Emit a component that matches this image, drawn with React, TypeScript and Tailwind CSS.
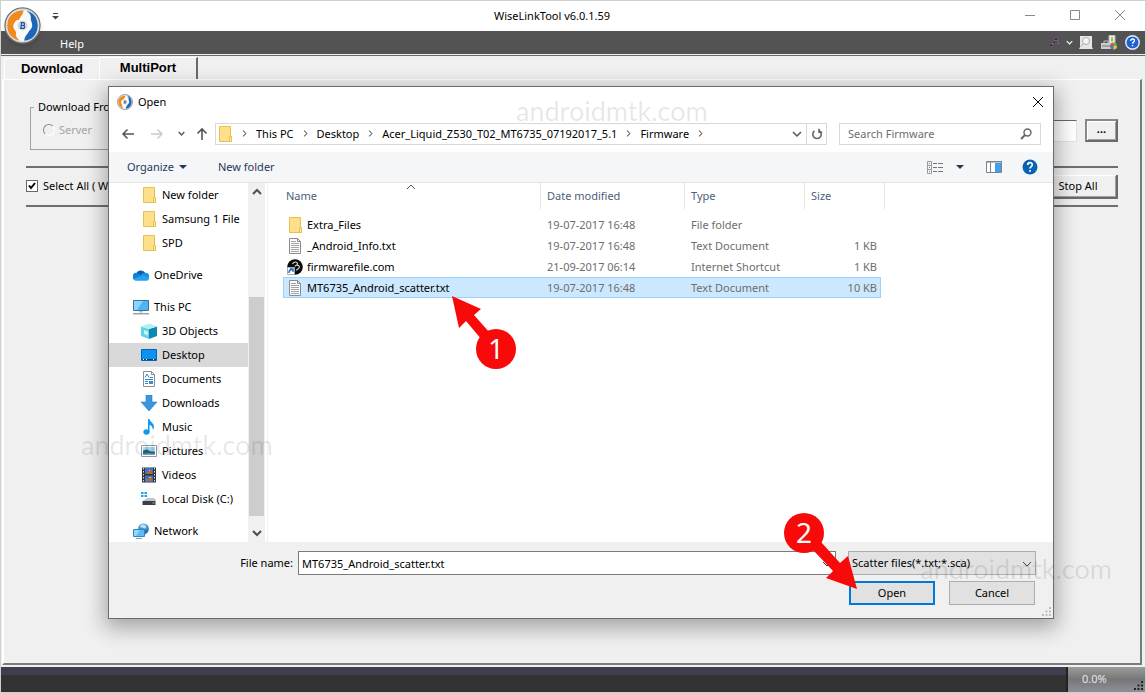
import type { ReactNode } from "react";

const places = [
  { name: "New folder", icon: "folder", level: 2 },
  { name: "Samsung 1 File", icon: "folder", level: 2 },
  { name: "SPD", icon: "folder", level: 2 },
  { name: "OneDrive", icon: "onedrive", level: 1 },
  { name: "This PC", icon: "pc", level: 1 },
  { name: "3D Objects", icon: "cube", level: 2 },
  { name: "Desktop", icon: "desktop", level: 2, active: true },
  { name: "Documents", icon: "documents", level: 2 },
  { name: "Downloads", icon: "downloads", level: 2 },
  { name: "Music", icon: "music", level: 2 },
  { name: "Pictures", icon: "pictures", level: 2 },
  { name: "Videos", icon: "videos", level: 2 },
  { name: "Local Disk (C:)", icon: "disk", level: 2 },
  { name: "Network", icon: "network", level: 1 },
];

const files = [
  { name: "Extra_Files", icon: "folder", date: "19-07-2017 16:48", type: "File folder", size: "" },
  { name: "_Android_Info.txt", icon: "text", date: "19-07-2017 16:48", type: "Text Document", size: "1 KB" },
  { name: "firmwarefile.com", icon: "link", date: "21-09-2017 06:14", type: "Internet Shortcut", size: "1 KB" },
  {
    name: "MT6735_Android_scatter.txt",
    icon: "text",
    date: "19-07-2017 16:48",
    type: "Text Document",
    size: "10 KB",
    selected: true,
  },
];

const crumbs = ["This PC", "Desktop", "Acer_Liquid_Z530_T02_MT6735_07192017_5.1", "Firmware"];

const glyphs: Record<string, ReactNode> = {
  folder: (
    <>
      <path d="M2.5.5h11v10h1v5h-12z" fill="#ffe08a" stroke="#e9c04c" />
      <path d="M12.5 15.5v-5h2v5z" fill="#ffe9a8" stroke="#e9c04c" />
    </>
  ),
  onedrive: (
    <>
      <path d="M3 7.500A5 5 0 0 1 12.300 6L9 11H3z" fill="#0a5fb5" />
      <path d="M4 6A3.700 3.700 0 0 0 .8 12.500l8.200-3.900z" fill="#1180d8" />
      <path d="M8 9.500a3.800 3.800 0 0 1 4.500-3.700A3.700 3.700 0 0 1 15.500 12z" fill="#1a90e6" />
      <path d="M.7 12c.5 1.300 1.500 1.800 2.800 1.800H13c2.200 0 3.400-1.800 2.800-3.500L9 8.200z" fill="#27a3f2" />
    </>
  ),
  pc: (
    <>
      <path d="M.5 1.500h15v10H.5z" fill="#4db4f5" stroke="#44718f" />
      <path d="M1 2h9L4 11H1z" fill="#8ad4ff" />
      <path d="M6 12h4v1.500H6z" fill="#b9c6cf" />
      <path d="M0 14h16v1.500H0z" fill="#8fa6b5" />
    </>
  ),
  cube: (
    <>
      <path d="M0 3.500 8 6v10L0 13z" fill="#5fd3e6" />
      <path d="M16 3.500 8 6v10l8-3z" fill="#0f87b0" />
      <path d="m0 3.500 8-3 8 3L8 6z" fill="#b4edf5" />
      <path d="m3 7 4 1.500v4L3 11z" fill="#c9f4f8" />
    </>
  ),
  desktop: (
    <>
      <path d="M.5 2.500h15v11H.5z" fill="#0a93f5" stroke="#0763ab" />
      <path d="M1 12.500h14" stroke="#0a3f73" />
      <path d="M2 12.500h1m2 0h1m6 0h1" stroke="#fff" />
    </>
  ),
  documents: (
    <>
      <path d="M2.500.5h8l3 3v12h-11z" fill="#fff" stroke="#8a8f94" />
      <path d="M10.500.5v3h3" fill="none" stroke="#8a8f94" />
      <path d="M4 6.500 6 3l2 3.500M9 6.500h3M4 8.500h8M4 10.500h3M4 12.500h3" fill="none" stroke="#2b88d0" />
      <path d="M8 10h4v3H8z" fill="#3f8fc4" />
    </>
  ),
  downloads: <path d="M5 0h6v7h5l-8 9-8-9h5z" fill="#3a96e0" stroke="#2a82cb" strokeWidth=".6" />,
  music: (
    <>
      <path d="M7 0h1.500c.5 3 4.500 4 4.500 7.500 0 1.500-.5 2.500-1.300 3.200C12 8 10.500 6.500 8.500 6v7H7z" fill="#0c9bf0" />
      <ellipse cx="5.500" cy="13" rx="3.100" ry="2.700" fill="#0c9bf0" />
    </>
  ),
  pictures: (
    <>
      <path d="M.5 2.500h15v11H.5z" fill="#fff" stroke="#8f979d" />
      <path d="M2 4h12v8H2z" fill="#9fd6f5" />
      <path d="M2 8c3-2 5-1 7 0s4 0 5 1v3H2z" fill="#2f6276" />
      <path d="M2 10.500h12V12H2z" fill="#6ea8cc" />
    </>
  ),
  videos: (
    <>
      <path d="M1 .5h14v15H1z" fill="#333" />
      <path d="M2.500 1v14M13.500 1v14" stroke="#ddd" strokeDasharray="1.500 1.500" />
      <path d="M4 1h8v6H4zM4 8.500h8v6.500H4z" fill="#3f6fd1" />
      <path d="M6 4.500h3V3h2v4H6zM5 12h4v-2h2v4H5z" fill="#b9682a" />
      <path d="M8 3h1v1H8zM8 10h2v1H8z" fill="#f4c542" />
    </>
  ),
  disk: (
    <>
      <path d="M0 1h2.500v2H0zM3.500 1H6v2H3.500zM0 4h2.500v2H0zM3.500 4H6v2H3.500z" fill="#19a4f0" />
      <path d="M4 8.500 6 7h7l2 2v1H2z" fill="#c2c6c9" />
      <path d="M1.500 10h13v4h-13z" fill="#3a3f42" />
      <path d="M11.500 12h2" stroke="#5fe06a" />
    </>
  ),
  network: (
    <>
      <circle cx="10.500" cy="6" r="5.500" fill="#4a94c9" />
      <path d="M7 3c2-2.500 5-2 6 0s-1 3-3 2-3 0-3-2z" fill="#b8dff2" />
      <path d="M12 7c2-1 3 0 3.500-.5A6 6 0 0 1 12 11z" fill="#2a6da1" />
      <path d="M.5 6.500h11v7H.5z" fill="#5bbcf7" stroke="#2f86bd" />
      <path d="M1 7h6l-4 6H1z" fill="#92d8fd" />
      <path d="M3 15.500h6" stroke="#7ea3b8" />
    </>
  ),
  text: (
    <>
      <path d="M2.500.5h8l3 3v12h-11z" fill="#fafafa" stroke="#8c8c8c" />
      <path d="M10.500.5v3h3" fill="none" stroke="#8c8c8c" />
      <path d="M4 3.500h5M4 5.500h8M4 7.500h8M4 9.500h8M4 11.500h8M4 13.500h8" stroke="#a5a5a5" />
    </>
  ),
  link: (
    <>
      <circle cx="8" cy="8" r="7.800" fill="#0b0b0b" />
      <path d="M5.500 5c1-2.500 4.500-2.500 5-.5S8 6 8 7.500M10 6.500c2-.5 3 1 2 2.500s-2.500 1-2.500 2.500" fill="none" stroke="#ddd" strokeWidth="1.100" />
      <path d="M.5 8.500h7v7h-7z" fill="#fff" stroke="#aaa" />
      <path d="M2 14c0-2.500 1-3.500 3-3.500M3 10h3v3" fill="none" stroke="#1766c2" strokeWidth="1.400" />
    </>
  ),
};

function Icon({ name }: { name: string }) {
  return (
    <svg viewBox="0 0 16 16" className="h-4 w-4 shrink-0" aria-hidden="true">
      {glyphs[name]}
    </svg>
  );
}

function Chevron({ className }: { className: string }) {
  return (
    <svg viewBox="0 0 10 10" className={className} fill="none" stroke="currentColor" aria-hidden="true">
      <path d="m1 3 4 4 4-4" />
    </svg>
  );
}

function Logo({ className }: { className: string }) {
  return (
    <svg viewBox="0 0 40 40" className={className} aria-hidden="true">
      <circle cx="20" cy="20" r="19" fill="#d9dbdd" stroke="#6f7478" strokeWidth="1.500" />
      <circle cx="20" cy="20" r="16.800" fill="#f8f9fa" />
      <path d="M21 3.500C10 3.500 3.500 11 3.500 20S9 34.500 17 36.500c-3-3-5-5.500-4-8.500.5-2-3-4-3-7.500 0-2.500 2-4 3-6 2-.5 3 0 4-2 1-3 4-4.500 4-9z" fill="#f08a1d" />
      <path d="M24 4c3.500 2 5.500 4.500 5 8-.5 2.500 1.500 4.500 1.500 8s-3 5-4 7c-1.500 3-4.500 5-4.500 9.500C31 36 36.500 29 36.500 20S31 5.500 24 4z" fill="#1b66b8" />
      <circle cx="20" cy="20" r="5.500" fill="#d3d9e0" />
      <path d="M18 17h2.700a1.400 1.400 0 0 1 0 3h-2.200 2.200a1.500 1.500 0 0 1 0 3.200H17.500M19 17l-.8 6" fill="none" stroke="#1a4f94" strokeWidth="1.300" />
    </svg>
  );
}

function HelpBadge({ className }: { className: string }) {
  return (
    <svg viewBox="0 0 16 16" className={className} aria-hidden="true">
      <circle cx="8" cy="8" r="7.500" fill="currentColor" />
      <path d="M5.700 6c0-3 4.600-3 4.600-.3C10.300 7.500 8 7.600 8 9.600M8 11v1.700" fill="none" stroke="#fff" strokeWidth="1.700" />
    </svg>
  );
}

function TitleBar() {
  return (
    <header className="flex h-[30px] items-center bg-white pr-[3px]">
      <div className="w-24 pl-[51px]">
        <button type="button" aria-label="Customize toolbar" className="block text-[#444]">
          <svg viewBox="0 0 7 8" className="h-2 w-[7px]" aria-hidden="true">
            <path d="M1 1.500h5" stroke="currentColor" />
            <path d="M0 4h7L3.500 7.500z" fill="currentColor" />
          </svg>
        </button>
      </div>
      <h1 className="flex-1 text-center">WiseLinkTool v6.0.1.59</h1>
      <div className="flex text-[#8a8a8a]">
        <button type="button" aria-label="Minimize" className="flex h-7 w-[45px] items-center justify-center">
          <svg viewBox="0 0 12 12" className="h-3 w-3" stroke="currentColor"><path d="M1 5.500h10" /></svg>
        </button>
        <button type="button" aria-label="Maximize" className="flex h-7 w-[45px] items-center justify-center">
          <svg viewBox="0 0 12 12" className="h-3 w-3" fill="none" stroke="currentColor"><path d="M1.500.5h9v9h-9z" /></svg>
        </button>
        <button type="button" aria-label="Close window" className="flex h-7 w-[45px] items-center justify-center">
          <svg viewBox="0 0 12 12" className="h-3 w-3" stroke="currentColor"><path d="m1 0 10 10M11 0 1 10" /></svg>
        </button>
      </div>
    </header>
  );
}

function MenuBar() {
  return (
    <nav className="flex h-[23px] items-center justify-between bg-[#535353] pr-1.5 pl-[59px] text-white">
      <button type="button" className="pt-0.5">Help</button>
      <div className="flex items-center">
        <svg viewBox="0 0 10 10" className="h-2.5 w-2.5" fill="none" aria-hidden="true">
          <path d="M1 9c0-3 2-3 2.500-5S7 1 8 3s0 3 1.500 4" stroke="#b04fc0" strokeWidth="1.200" strokeDasharray="2 1.200" />
          <path d="M0 7.500h2M3 4h2M5 1.500h2" stroke="#222" />
        </svg>
        <Chevron className="mr-0.5 ml-1.5 h-[7px] w-[7px] stroke-[1.500px]" />
        <svg viewBox="0 0 14 14" className="mx-1 h-3.5 w-3.5" aria-hidden="true">
          <path d="M1 0h12v11l1 2H0l1-2z" fill="#e6e6e6" />
          <circle cx="7" cy="5" r="3.500" fill="#f7f7f7" stroke="#aaa" />
          <path d="m4 8-2 2.500" stroke="#aaa" />
        </svg>
        <svg viewBox="0 0 17 16" className="mr-2 ml-1 h-4 w-[17px]" aria-hidden="true">
          <path d="M8 .5h6v8H8z" fill="#e8efe0" stroke="#b5bdb0" />
          <path d="M11 2.500v4" stroke="#72a84d" strokeWidth="1.500" />
          <path d="M0 8h12v6H0z" fill="#c9ced1" />
          <path d="M1 11h11" stroke="#777" />
          <path d="M3 8V6h4v2" fill="none" stroke="#bbb" />
          <path d="M12.500 7.500V11H9a3.500 3.500 0 0 1 3.500-3.500z" fill="#e8502f" />
          <path d="M12.500 7.500A3.500 3.500 0 0 1 16 11h-3.500z" fill="#58b947" />
          <path d="M9 11h3.500v3.500A3.500 3.500 0 0 1 9 11z" fill="#3b7de0" />
          <path d="M16 11a3.500 3.500 0 0 1-3.500 3.500V11z" fill="#f6c62e" />
        </svg>
        <HelpBadge className="h-[13px] w-[13px] rounded-full bg-white text-[#1d62cf] ring-1 ring-[#cfe0f7]" />
      </div>
    </nav>
  );
}

function MultiPortPanel() {
  return (
    <main className="mr-[3px] ml-px flex flex-1 flex-col border-t border-r-2 border-b-2 border-l-2 border-t-white border-r-[#7b7b7b] border-b-[#7b7b7b] border-l-white pt-[19px] pr-[22px] pl-[22px]">
      <div className="flex items-start justify-between">
        <fieldset className="ml-1 h-[51px] w-72 border border-[#a0a0a0] px-[3px]">
          <legend className="px-1 leading-4">Download From</legend>
          <label className="ml-[9px] flex items-center gap-1 pt-[7px] text-[#a5a5a5]">
            <input
              type="radio"
              name="source"
              disabled
              className="h-3 w-3 appearance-none rounded-full border border-[#8a8a8a] border-r-white border-b-white bg-[#f0f0f0]"
            />
            Server
          </label>
        </fieldset>
        <div className="flex flex-1 items-center gap-2 pt-5 pl-6">
          <input
            aria-label="Scatter file"
            className="h-[22px] min-w-0 flex-1 border border-[#e3e3e3] border-t-[#696969] bg-white px-1"
          />
          <button
            type="button"
            className="h-[23px] w-[33px] border-2 border-[#6a6a6a] border-t-[#8a8a8a] border-l-[#8a8a8a] pb-1 font-bold shadow-[inset_1px_1px_#fff,inset_-1px_-1px_#a0a0a0]"
          >
            ...
          </button>
        </div>
      </div>
      <hr className="mt-4 border-t-2 border-[#6f6f6f]" />
      <div className="flex h-[37px] items-center justify-between">
        <label className="flex items-center gap-[5px] pb-0.5">
          <span className="relative flex">
            <input
              type="checkbox"
              defaultChecked
              className="h-3 w-3 appearance-none border border-[#696969] bg-white"
            />
            <svg viewBox="0 0 12 12" className="absolute inset-0 h-3 w-3" fill="none" aria-hidden="true">
              <path d="m3 5.500 2 2.500 4-5" stroke="#000" strokeWidth="2" />
            </svg>
          </span>
          Select All ( With Scatter )
        </label>
        <button
          type="button"
          className="h-6 w-[78px] border-r-2 border-b-2 border-[#6a6a6a] shadow-[inset_1px_1px_#fff,inset_-1px_-1px_#a0a0a0]"
        >
          Stop All
        </button>
      </div>
      <hr className="border-t-2 border-[#6f6f6f]" />
    </main>
  );
}

function AddressBar() {
  return (
    <div className="flex h-[37px] items-center pr-3 pl-3 text-[#555]">
      <button type="button" aria-label="Back">
        <svg viewBox="0 0 14 12" className="h-3 w-3.5" fill="none" stroke="#555" strokeWidth="1.500">
          <path d="M13 6H2m4.500-4.500L2 6l4.500 4.500" />
        </svg>
      </button>
      <button type="button" aria-label="Forward" className="ml-[15px]">
        <svg viewBox="0 0 14 12" className="h-3 w-3.5" fill="none" stroke="#ccc" strokeWidth="1.500">
          <path d="M1 6h11M7.500 1.500 12 6l-4.500 4.500" />
        </svg>
      </button>
      <button type="button" aria-label="Recent locations" className="ml-3.5">
        <Chevron className="h-[7px] w-[7px] stroke-2" />
      </button>
      <button type="button" aria-label="Up" className="ml-[11px]">
        <svg viewBox="0 0 12 14" className="h-3.5 w-3" fill="none" stroke="#555" strokeWidth="1.600">
          <path d="M6 13V2M1.500 6.500 6 2l4.500 4.500" />
        </svg>
      </button>
      <div className="ml-[7px] flex h-[22px] flex-1 items-center border border-[#d9d9d9] pl-px text-black">
        <Icon name="folder" />
        {crumbs.map((crumb) => (
          <span key={crumb} className="flex items-center">
            <Chevron className="mx-2 h-[7px] w-[7px] -rotate-90 stroke-[1.500px] text-[#666]" />
            <a href="#" className="whitespace-nowrap">{crumb}</a>
          </span>
        ))}
        <Chevron className="mx-2 h-[7px] w-[7px] -rotate-90 stroke-[1.500px] text-[#666]" />
        <button type="button" aria-label="Previous locations" className="mr-1 ml-auto text-[#555]">
          <Chevron className="h-2.5 w-2.5 stroke-[1.500px]" />
        </button>
        <button
          type="button"
          aria-label="Refresh"
          className="flex h-5 w-5 items-center justify-center border-l border-[#d9d9d9]"
        >
          <svg viewBox="0 0 12 12" className="h-3 w-3" fill="none" stroke="#666" strokeWidth="1.600">
            <path d="M3.500 3A4.200 4.200 0 1 0 8.500 3M8 .8v3.400h3.200" />
          </svg>
        </button>
      </div>
      <div className="ml-3 flex h-[22px] w-[202px] items-center border border-[#d9d9d9] pr-2 pl-2">
        <input
          type="search"
          aria-label="Search Firmware"
          placeholder="Search Firmware"
          className="min-w-0 flex-1 outline-none placeholder:text-[#6d6d6d]"
        />
        <svg viewBox="0 0 12 12" className="h-3 w-3" fill="none" stroke="#666" strokeWidth="1.400" aria-hidden="true">
          <circle cx="7.500" cy="4.500" r="3.500" />
          <path d="M5 7 1 11" strokeWidth="2" />
        </svg>
      </div>
    </div>
  );
}

function CommandBar() {
  return (
    <div className="flex h-[31px] items-center border-b border-[#e5e5e5] bg-[#f5f6f7] pr-[15px] pl-[18px] text-[#1e395b]">
      <button type="button" className="flex items-center gap-[5px]">
        Organize
        <svg viewBox="0 0 8 4" className="h-1 w-2" aria-hidden="true"><path d="M0 0h8L4 4z" fill="currentColor" /></svg>
      </button>
      <button type="button" className="ml-[31px]">New folder</button>
      <button type="button" aria-label="Change your view" className="ml-auto flex items-center gap-3">
        <svg viewBox="0 0 17 13" className="h-[13px] w-[17px]" fill="none" aria-hidden="true">
          <path d="M.5.5h4v12h-4zM.5 4.500h4M.5 8.500h4" stroke="#9a9a9a" />
          <path d="M6 2.500h4m1 0h5M6 6.500h4m1 0h5M6 10.500h4m1 0h5" stroke="#777" />
          <path d="M2 2.500h1" stroke="#4a90d9" />
          <path d="M2 6.500h1" stroke="#4aa564" />
          <path d="M2 10.500h1" stroke="#d9534a" />
        </svg>
        <svg viewBox="0 0 8 4" className="h-1 w-2" aria-hidden="true"><path d="M0 0h8L4 4z" fill="currentColor" /></svg>
      </button>
      <button type="button" aria-label="Preview pane" className="ml-[22px]">
        <svg viewBox="0 0 16 12" className="h-3 w-4" fill="none" aria-hidden="true">
          <path d="M.5.500h15v11H.5z" fill="#fff" stroke="#7d8388" />
          <path d="M0 1h16M4.500 1v10" stroke="#7d8388" />
          <path d="M9 2h6v9H9z" fill="#41a0ea" />
        </svg>
      </button>
      <button type="button" aria-label="Help" className="ml-5">
        <HelpBadge className="h-4 w-4 text-[#0a62b3]" />
      </button>
    </div>
  );
}

function Places() {
  return (
    <>
      <ul className="w-[139px] shrink-0 overflow-hidden">
        {places.map((place) => (
          <li
            key={place.name}
            className={`h-6 ${place.level === 1 ? "mt-2 pl-6" : "pl-8"} ${place.active ? "bg-[#d9d9d9]" : ""}`}
          >
            <a href="#" className="flex h-6 items-center gap-[5px] whitespace-nowrap">
              <Icon name={place.icon} />
              {place.name}
            </a>
          </li>
        ))}
      </ul>
      <div className="flex w-[17px] shrink-0 flex-col items-center justify-between bg-[#f0f0f0] px-px text-[#505050]">
        <button type="button" aria-label="Scroll up" className="py-1">
          <Chevron className="h-2.5 w-2.5 rotate-180 stroke-2" />
        </button>
        <div className="mt-24 w-full flex-1 bg-[#cdcdcd]" />
        <button type="button" aria-label="Scroll down" className="mt-2 py-1">
          <Chevron className="h-2.5 w-2.5 stroke-2" />
        </button>
      </div>
    </>
  );
}

function FileTable() {
  return (
    <table className="w-[602px] table-fixed border-separate border-spacing-0 text-left">
      <thead className="text-[#4c607a]">
        <tr className="h-[26px]">
          <th className="relative w-[258px] border-r border-[#e5e5e5] pl-[3px] font-normal">
            Name
            <Chevron className="absolute -top-px left-[123px] h-2.5 w-2.5 rotate-180 text-[#555]" />
          </th>
          <th className="w-36 border-r border-[#e5e5e5] pl-1.5 font-normal">Date modified</th>
          <th className="w-[120px] border-r border-[#e5e5e5] pl-1.5 font-normal">Type</th>
          <th className="w-[76px] pl-1.5 font-normal">Size</th>
          <th className="border-r border-[#e5e5e5]" aria-hidden="true" />
        </tr>
        <tr className="h-[5px]" aria-hidden="true" />
      </thead>
      <tbody className="text-[#6d6d6d]">
        {files.map((file) => {
          const cell = file.selected ? "border-y border-[#99d1ff] bg-[#cce8ff]" : "";
          return (
            <tr key={file.name} className="h-[21px]">
              <td className={`text-black ${cell} ${file.selected ? "border-l pl-[3px]" : "pl-1"}`}>
                <span className="flex items-center gap-1">
                  <Icon name={file.icon} />
                  {file.name}
                </span>
              </td>
              <td className={`pl-1.5 ${cell}`}>{file.date}</td>
              <td className={`pl-1.5 ${cell}`}>{file.type}</td>
              <td className={`text-right ${cell} ${file.selected ? "border-r pr-[3px]" : "pr-1"}`}>{file.size}</td>
            </tr>
          );
        })}
      </tbody>
    </table>
  );
}

function DialogFooter() {
  return (
    <footer className="relative bg-[#f0f0f0] pt-[9px] pr-[17px] pb-[13px]">
      <div className="flex items-center">
        <label htmlFor="file-name" className="mr-[5px] w-[184px] text-right">File name:</label>
        <div className="relative flex flex-1">
          <input
            id="file-name"
            defaultValue="MT6735_Android_scatter.txt"
            className="h-6 w-full border border-[#7a7a7a] bg-white px-[3px] outline-none"
          />
          <Chevron className="absolute top-2 right-1 h-2.5 w-2.5 text-[#444]" />
        </div>
        <div className="relative ml-3 flex w-[188px]">
          <select
            aria-label="File type"
            className="h-6 w-full appearance-none border border-[#adadad] bg-[#e1e1e1] pl-[3px] outline-none"
          >
            <option>Scatter files(*.txt;*.sca)</option>
          </select>
          <Chevron className="pointer-events-none absolute top-2 right-1 h-2.5 w-2.5 text-[#444]" />
        </div>
      </div>
      <div className="mt-1.5 flex justify-end gap-3.5 pr-px">
        <button type="button" className="h-6 w-[86px] border-2 border-[#0078d7] bg-[#e1e1e1]">Open</button>
        <button type="button" className="h-6 w-[86px] border border-[#adadad] bg-[#e1e1e1]">Cancel</button>
      </div>
      <Grip className="absolute right-0.5 bottom-0.5 h-[9px] w-[9px] text-[#bdbdbd]" />
    </footer>
  );
}

function Grip({ className }: { className: string }) {
  return (
    <svg viewBox="0 0 9 9" className={className} fill="currentColor" aria-hidden="true">
      <path d="M7 0h2v2H7zM7 3.500h2v2H7zM3.500 3.500h2v2h-2zM7 7h2v2H7zM3.500 7h2v2h-2zM0 7h2v2H0z" />
    </svg>
  );
}

function OpenDialog() {
  return (
    <section
      role="dialog"
      aria-label="Open"
      className="absolute top-[85px] right-[91px] left-[107px] border border-[#6b6b6b] bg-white shadow-[0_6px_20px_3px_rgba(0,0,0,0.32)]"
    >
      <div className="flex h-7 items-center pt-0.5 pr-[9px] pl-2">
        <Logo className="h-4 w-4" />
        <h2 className="ml-[5px] flex-1">Open</h2>
        <button type="button" aria-label="Close">
          <svg viewBox="0 0 12 12" className="h-3 w-3" stroke="#000"><path d="m1 1 10 10M11 1 1 11" /></svg>
        </button>
      </div>
      <AddressBar />
      <CommandBar />
      <div className="flex h-[359px]">
        <Places />
        <div className="ml-0.5 flex-1 overflow-hidden border-l border-[#f0f0f0] pl-[15px]">
          <FileTable />
        </div>
      </div>
      <DialogFooter />

      {/* Step markers */}
      <svg viewBox="0 0 68 80" className="pointer-events-none absolute top-[205px] left-[341px] h-20 w-[68px]" fill="#f80a0a">
        <path d="m2 4 29 13-7 6 16 18-8 7-16-19-7 7z" />
        <circle cx="46" cy="57" r="20" />
        <text x="46" y="67" textAnchor="middle" fill="#fff" className="text-[28px]">1</text>
      </svg>
      <svg viewBox="0 0 78 80" className="pointer-events-none absolute right-[193px] bottom-[27px] h-20 w-[78px]" fill="#f80a0a">
        <path d="m75 78-31-11 7-7-20-21 8-8 19 21 8-7z" />
        <circle cx="22" cy="22" r="20" />
        <text x="22" y="32" textAnchor="middle" fill="#fff" className="text-[28px]">2</text>
      </svg>
    </section>
  );
}

export default function App() {
  return (
    <div className="relative flex min-h-screen flex-col overflow-hidden border border-[#cfcfcf] bg-[#f0f0f0] font-['Noto_Sans',sans-serif] text-[11px] leading-4 text-black">
      <TitleBar />
      <MenuBar />
      <Logo className="absolute top-1.5 left-[3px] h-[37px] w-[37px] rounded-full shadow-md" />

      <div className="mt-px flex items-end border-t border-[#696969] pt-px pl-[3px] font-['Liberation_Sans',sans-serif] text-[13px] font-bold">
        <button type="button" className="h-[21px] w-24 border border-b-0 border-white">Download</button>
        <button type="button" className="h-[22px] w-[98px] border-t border-r-2 border-t-white border-r-[#696969] pb-0.5">
          MultiPort
        </button>
      </div>
      <MultiPortPanel />

      <footer className="mt-0.5 flex h-[25px] bg-linear-to-b from-[#3d404c] from-32% to-[#323232] to-32% text-white">
        <div className="flex-1" />
        <div className="relative flex w-[79px] items-center border-l-2 border-[#222] bg-linear-to-b from-[#9b9b9b] via-[#777] to-[#8c9096] pb-0.5 pl-3.5 text-[#e6e6e6]">
          0.0%
          <Grip className="absolute right-0.5 bottom-0.5 h-[9px] w-[9px] text-[#222]" />
        </div>
      </footer>

      <OpenDialog />

      <div className="pointer-events-none font-['Lato',sans-serif] text-[27px] leading-8 text-black/10" aria-hidden="true">
        <span className="absolute top-[94px] left-[515px]">androidmtk.com</span>
        <span className="absolute top-[428px] left-20">androidmtk.com</span>
        <span className="absolute top-[552px] right-[33px]">androidmtk.com</span>
      </div>
    </div>
  );
}
